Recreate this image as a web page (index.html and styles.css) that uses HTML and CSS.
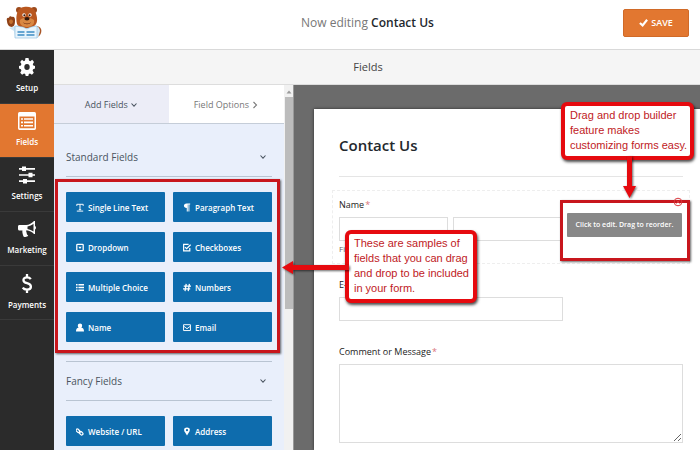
FILE: index.html
```
<!DOCTYPE html>
<html lang="en">
<head>
<meta charset="utf-8" />
<title>Now editing Contact Us</title>
<meta name="viewport" content="width=device-width"/>
<link rel="stylesheet" href="styles.css">
</head>
<body>
  <svg class="symbols" aria-hidden="true">
    <symbol id="down" viewBox="0 0 8 8"><path d="M1.500 2.500 4 5.200 6.500 2.500" fill="none" stroke="currentColor" stroke-width="1.100"/></symbol>
    <symbol id="right" viewBox="0 0 8 8"><path d="M2.500 1 5.500 4 2.500 7" fill="none" stroke="currentColor" stroke-width="1.100"/></symbol>
  </svg>

  <header class="topbar">
    <a class="logo" href="#" aria-label="Home">
      <svg viewBox="0 0 36 34" width="36" height="34">
        <circle cx="13" cy="4" r="3" fill="#9c4a1c"/><circle cx="28" cy="4" r="3" fill="#9c4a1c"/>
        <path d="M31 20c4 1 5 4 4 7-1 3-3 4-5 4z" fill="#a95627"/>
        <path d="M1 15c-1-3 1-4 2-3 0-2 2-2 3-1 2-1 3 1 3 3 0 3 0 6-3 7-3 0-5-3-5-6z" fill="#8f4218"/>
        <path d="M3 15c1-2 3-2 4 0 0 2-1 3-2 3s-2-1-2-3z" fill="#c4702f"/>
        <path d="M3 22l6-2 5-1 14 0c4 1 6 3 6 6l-2 7H9l-1-7z" fill="#cfe6f5"/>
        <path d="M12 5c2-5 14-6 17 0 2 4 3 10 1 13-3 5-16 6-19 0-1-4-1-9 1-13z" fill="#b9571f"/>
        <path d="M14 14c3-3 10-3 14 0 1 4-2 7-7 7s-8-3-7-7z" fill="#d98843"/>
        <circle cx="18" cy="9" r="1.700" fill="#fff"/><circle cx="24" cy="9" r="1.700" fill="#fff"/>
        <circle cx="18.300" cy="9.300" r="1" fill="#30180c"/><circle cx="23.700" cy="9.300" r="1" fill="#30180c"/>
        <ellipse cx="21" cy="12.800" rx="2.600" ry="1.800" fill="#30180c"/>
        <path d="M17 16c2 2 6 2 8 0-1 3-7 3-8 0z" fill="#6a2c13"/>
        <path d="M9 20l8 1 4 2 4-2 6-1v12H9z" fill="#e8f4fc" stroke="#8cbddd" stroke-width=".6"/>
        <path d="M11.500 26h7M11.500 29h7M20.500 26h8M20.500 29h8" stroke="#3c8cc4" stroke-width="1.700"/>
      </svg>
    </a>
    <h1>Now editing <strong>Contact Us</strong></h1>
    <button class="save" type="button">
      <svg viewBox="0 0 10 10" width="9" height="9"><path d="M1 5.500 4 8.200 9 2" fill="none" stroke="#fff" stroke-width="2.400"/></svg>
      SAVE
    </button>
  </header>

  <div class="builder">
    <nav class="sidebar">
      <a href="#setup">
        <svg viewBox="0 0 16 16" width="16" height="18" preserveAspectRatio="none" fill="#fff"><path fill-rule="evenodd" d="M6.500 0h3l.5 2.200 1.300.6L13.200 1.600l1.800 2-1.200 1.900.5 1.200L16 7.200v2.200l-1.900.5-.5 1.200 1.200 1.900-1.900 1.900-1.900-1.200-1.200.5L9.300 16H6.700l-.5-1.800-1.200-.5-1.900 1.200-1.900-1.900 1.200-1.900-.5-1.200L0 9.400V7l1.900-.4.5-1.200L1.200 3.500l1.800-1.900 1.900 1.200L6 2.200zM8 5.300a2.700 2.700 0 1 0 0 5.400 2.700 2.700 0 0 0 0-5.400z"/></svg>
        Setup
      </a>
      <a class="active" href="#fields">
        <svg viewBox="0 0 18 16" width="18" height="18" preserveAspectRatio="none"><path fill="#fff" fill-rule="evenodd" d="M1.500 0h15A1.500 1.500 0 0 1 18 1.500v13a1.500 1.500 0 0 1-1.500 1.500h-15A1.500 1.500 0 0 1 0 14.500v-13A1.500 1.500 0 0 1 1.500 0zM1.500 4v10.500h15V4z"/><path d="M3 6.200h2M6 6.200h9M3 9.200h2M6 9.200h9M3 12.200h2M6 12.200h9" stroke="#fff" stroke-width="1.400"/></svg>
        Fields
      </a>
      <a href="#settings">
        <svg viewBox="0 0 16 16" width="16" height="18" preserveAspectRatio="none"><path d="M0 2.500h16M0 8h16M0 13.500h16" stroke="#fff" stroke-width="1.500"/><path d="M3 .5h4v4H3zM9.500 6h4v4h-4zM4 11.500h4v4H4z" fill="#fff"/></svg>
        Settings
      </a>
      <a href="#marketing">
        <svg viewBox="0 0 18 18" width="18" height="18"><path fill="#fff" fill-rule="evenodd" d="M1.500 5H8c3 0 6-2 8-4h1v5c1.300.5 1.300 3 0 3.500V14h-1c-2-2-4.500-3.500-7.500-3.700-.7 1.200 0 2 .3 2.700-.3 1 .3 1.700 1.400 2.600-1 1.700-3.500 1.700-4.700.8C4.800 14.300 4 12.300 4.500 10.500h-3C.5 10.500 0 9.800 0 9V6.500C0 5.700.5 5 1.500 5zm8 1.400V9c2.200.4 4.200 1.300 6 2.600V3.700c-1.800 1.400-3.800 2.300-6 2.700z"/></svg>
        Marketing
      </a>
      <a href="#payments">
        <svg viewBox="0 0 12 20" width="12" height="19"><path d="M10 5.500C9 4 7.500 3.600 6 3.600c-5 0-5 5 0 6.100 5.500 1.200 5.500 6.700 0 6.700-2 0-3.500-.6-4.500-2.100M6 0v4M6 16v4" fill="none" stroke="#fff" stroke-width="2.400"/></svg>
        Payments
      </a>
    </nav>

    <main class="main">
      <h2 class="toolbar">Fields</h2>
      <div class="columns">
        <section class="panel">
          <div class="panel-body">
            <div class="tabs">
              <button class="active" type="button">Add Fields <svg width="8" height="8"><use href="#down"/></svg></button>
              <button type="button">Field Options <svg width="8" height="8"><use href="#right"/></svg></button>
            </div>

            <div class="group">
              <h3>Standard Fields <svg width="8" height="8"><use href="#down"/></svg></h3>
              <div class="field-grid">
                <button type="button"><svg viewBox="0 0 10 10" width="8" height="9"><path d="M1 3V1h8v2M5 1v7M3.500 7.800h3M1 9.500h8" fill="none" stroke="#fff" stroke-width="1.200"/></svg>Single Line Text</button>
                <button type="button"><svg viewBox="0 0 10 10" width="8" height="9"><path d="M4.500 0H9v1.200H8V10H6.800V1.200H6V10H4.700V5.500C0 5.500 0 0 4.500 0z" fill="#fff"/></svg>Paragraph Text</button>
                <button type="button"><svg viewBox="0 0 10 10" width="8" height="9"><rect x="1" y="1" width="8" height="8" rx="1" fill="none" stroke="#fff" stroke-width="1.600"/><path d="M3 4h4L5 6.800z" fill="#fff"/></svg>Dropdown</button>
                <button type="button"><svg viewBox="0 0 10 10" width="8" height="9"><path d="M8.500 5.500v3.700H.8V1H7M2.500 4.500l2 2L9.500 1.500" fill="none" stroke="#fff" stroke-width="1.500"/></svg>Checkboxes</button>
                <button type="button"><svg viewBox="0 0 10 10" width="8" height="9"><path d="M0 1.500h2M3 1.500h7M0 5h2M3 5h7M0 8.500h2M3 8.500h7" stroke="#fff" stroke-width="1.800"/></svg>Multiple Choice</button>
                <button type="button"><svg viewBox="0 0 10 10" width="8" height="9"><path d="M4 .5 2.500 9.500M8 .5 6.500 9.500M1 3.300h9M0 6.700h9" stroke="#fff" stroke-width="1.600"/></svg>Numbers</button>
                <button type="button"><svg viewBox="0 0 10 10" width="8" height="9"><path d="M5 0c3.500 0 3 4 1.700 5.300C9 5.500 10 7 10 10H0c0-3 1-4.500 3.300-4.700C2 4 1.500 0 5 0z" fill="#fff"/></svg>Name</button>
                <button type="button"><svg viewBox="0 0 10 10" width="8" height="9"><path d="M.7 1.500h8.600v7.300H.7zM1 3.500l4 3 4-3" fill="none" stroke="#fff" stroke-width="1.200"/></svg>Email</button>
                <div class="highlight"></div>
              </div>
            </div>

            <div class="group">
              <h3>Fancy Fields <svg width="8" height="8"><use href="#down"/></svg></h3>
              <div class="field-grid">
                <button type="button"><svg viewBox="0 0 10 10" width="8" height="9"><g fill="none" stroke="#fff" stroke-width="1.500"><rect x="-1.500" y="1" width="5" height="3.200" rx="1.500" transform="rotate(45 1 2.500) translate(2 0)"/><rect x="4" y="5.500" width="5" height="3.200" rx="1.500" transform="rotate(45 6.500 7)"/><path d="M3.500 3.500l3 3"/></g></svg>Website / URL</button>
                <button type="button"><svg viewBox="0 0 10 10" width="8" height="9"><path fill="#fff" fill-rule="evenodd" d="M5 0c4.500 0 4 4 2.500 6L5 10 2.500 6C1 4 .5 0 5 0zm0 2a1.400 1.400 0 1 0 0 2.800A1.400 1.400 0 0 0 5 2z"/></svg>Address</button>
              </div>
            </div>
          </div>
          <div class="scrollbar">
            <svg viewBox="0 0 8 8" width="8" height="8"><path d="M1.500 5.500 4 2.500l2.500 3z" fill="#999"/></svg>
            <div class="thumb"></div>
          </div>
        </section>

        <section class="preview">
          <form class="paper">
            <h2>Contact Us</h2>

            <div class="field selected">
              <label for="first">Name<em>*</em></label>
              <div class="names">
                <input id="first" type="text">
                <input type="text" aria-label="Last name">
              </div>
              <small>First</small>
              <div class="edit-box">
                <svg class="remove" viewBox="0 0 10 10" width="10" height="10"><circle cx="5" cy="5" r="3.800" fill="none" stroke="#d9363b"/><path d="M3.500 3.500l3 3M6.500 3.500l-3 3" stroke="#d9363b"/></svg>
                <span class="hint">Click to edit. Drag to reorder.</span>
              </div>
              <div class="callout callout-drag">
                Drag and drop builder feature makes customizing forms easy.
                <svg class="arrow" viewBox="0 0 14 42" width="14" height="42"><path d="M5 0h5v30h4L7.500 42 1 30h4z" fill="#e60a0f"/></svg>
              </div>
              <div class="callout callout-samples">
                These are samples of fields that you can drag and drop to be included in your form.
                <svg class="arrow" viewBox="0 0 67 14" width="67" height="14"><path d="M67 5v5H11v4L0 7.500 11 1v4z" fill="#e60a0f"/></svg>
              </div>
            </div>

            <div class="field">
              <label for="email">E-mail<em>*</em></label>
              <input id="email" class="medium" type="text">
            </div>

            <div class="field">
              <label for="message">Comment or Message<em>*</em></label>
              <textarea id="message"></textarea>
            </div>
          </form>
        </section>
      </div>
    </main>
  </div>
</body>
</html>
```
FILE: styles.css
```
* {
  box-sizing: border-box;
}
html, body {
  height: 100%;
}
body {
  display: flex;
  flex-direction: column;
  margin: 0;
  overflow: hidden;
  background: #fff;
  color: #444;
  font-family: "Open Sans", "Noto Sans", sans-serif;
  font-size: 9px;
}
h1, h2, h3 {
  margin: 0;
  font-weight: 400;
}
a {
  text-decoration: none;
}
button, input, textarea {
  font-family: inherit;
}
button {
  border: none;
  cursor: pointer;
}
.symbols {
  position: absolute;
  width: 0;
  height: 0;
}

/* top bar */
.topbar {
  display: flex;
  align-items: center;
  flex: none;
  height: 50px;
  padding: 0 11px 4px 6px;
  border-bottom: 1px solid #d9d9d9;
}
.logo {
  width: 36px;
  height: 34px;
}
.topbar h1 {
  flex: 1;
  padding-left: 70px;
  color: #777;
  font-size: 12px;
  text-align: center;
}
.topbar strong {
  color: #23282d;
  font-weight: 600;
}
.save {
  display: flex;
  align-items: center;
  justify-content: center;
  gap: 3px;
  width: 66px;
  height: 28px;
  border: 1px solid #d06a28;
  border-radius: 2px;
  background: #e27730;
  color: #fff;
  font-size: 9px;
  font-weight: 600;
}

/* left navigation */
.builder {
  display: flex;
  flex: 1;
  min-height: 0;
}
.sidebar {
  flex: none;
  width: 54px;
  background: #2b2b2b;
}
.sidebar a {
  display: flex;
  flex-direction: column;
  align-items: center;
  justify-content: center;
  gap: 5px;
  height: 54px;
  border-bottom: 1px solid #3a3a3a;
  color: #fff;
  font-size: 8px;
  font-weight: 600;
  line-height: 14px;
}
.sidebar a.active {
  background: #e27730;
}
.main {
  display: flex;
  flex: 1;
  flex-direction: column;
  min-width: 0;
}
.toolbar {
  flex: none;
  height: 35px;
  padding-right: 18px;
  border-bottom: 1px solid #ddd;
  background: #f5f5f5;
  font-size: 11px;
  line-height: 34px;
  text-align: center;
}
.columns {
  display: flex;
  flex: 1;
  min-height: 0;
}

/* field panel */
.panel {
  display: flex;
  flex: none;
  width: 240px;
  background: #e9effb;
}
.panel-body {
  flex: 1;
}
.tabs {
  display: flex;
  height: 39px;
  border-bottom: 1px solid #c5cdd8;
}
.tabs button {
  flex: 1;
  padding: 0;
  background: #fff;
  color: #777;
  font-size: 9px;
}
.tabs button.active {
  background: #ecedf7;
  color: #4a5460;
}
.tabs svg {
  vertical-align: middle;
}
.group {
  padding: 0 12px;
}
.group h3 {
  display: flex;
  align-items: center;
  justify-content: space-between;
  height: 40px;
  padding-right: 5px;
  border-bottom: 1px solid #b9c4d2;
  color: #4a5460;
  font-size: 10px;
}
.group:nth-child(2) h3 {
  height: 53px;
  padding-top: 14px;
}
.group + .group h3 {
  border-top: 1px solid #b9c4d2;
}
.field-grid {
  position: relative;
  display: grid;
  grid-template-columns: 1fr 1fr;
  gap: 10px 8px;
  padding: 15px 0 19px;
}
.field-grid button {
  display: flex;
  align-items: center;
  gap: 4px;
  height: 30px;
  padding: 0 0 0 10px;
  border-radius: 1px;
  background: #0e6cad;
  color: #fff;
  font-size: 8px;
  font-weight: 600;
}
.highlight {
  position: absolute;
  top: 2px;
  right: -8px;
  bottom: 8px;
  left: -11px;
  border: 3px solid #c8161d;
  box-shadow: 1px 1px 2px rgba(0,0,0,0.6);
  pointer-events: none;
}
.scrollbar {
  display: flex;
  flex-direction: column;
  flex: none;
  align-items: center;
  width: 10px;
  padding-top: 3px;
  border-right: 1px solid #999;
  background: #f1f1f1;
}
.thumb {
  width: 8px;
  height: 212px;
  margin-top: 1px;
  background: #bcbcbc;
}

/* form preview */
.preview {
  flex: 1;
  min-width: 0;
  padding: 24px 0 0 20px;
  background: #6b6b6b;
}
.paper {
  height: 100%;
  padding: 0 17px 0 25px;
  background: #fff;
  box-shadow: 0 0 3px rgba(0,0,0,0.6);
}
.paper h2 {
  height: 68px;
  margin-bottom: 13px;
  border-bottom: 1px solid #e5e5e5;
  color: #23282d;
  font-size: 15px;
  font-weight: 600;
  line-height: 72px;
}
.field {
  margin-bottom: 24px;
}
.field label {
  display: block;
  margin-bottom: 5px;
  color: #222;
  font-size: 9px;
  font-weight: 500;
  line-height: 14px;
}
.field em {
  margin-left: 1px;
  color: #d9737a;
  font-style: normal;
}
.field input, .field textarea {
  display: block;
  height: 24px;
  border: 1px solid #ddd;
  background: #fff;
}
.field .medium {
  width: 65%;
}
.field textarea {
  width: 100%;
  height: 79px;
}
.selected {
  position: relative;
  margin: 0 -7px 14px;
  padding: 7px 6px 6px;
  border: 1px dashed #eee;
}
.names {
  display: grid;
  grid-template-columns: 1fr 1fr;
  gap: 5px;
  width: 65%;
}
.names input {
  width: 100%;
}
.selected small {
  display: block;
  color: #666;
  font-size: 8px;
  line-height: 16px;
}

/* notes drawn over the form */
.edit-box {
  position: absolute;
  top: 9px;
  right: -1px;
  width: 130px;
  height: 61px;
  padding: 10px 5px 0 4px;
  border: 3px solid #c8161d;
  box-shadow: 1px 1px 2px rgba(0,0,0,0.6);
}
.hint {
  display: block;
  height: 24px;
  border-radius: 1px;
  background: #888;
  color: #fff;
  font-size: 7px;
  font-weight: 600;
  line-height: 24px;
  text-align: center;
  white-space: nowrap;
}
.remove {
  position: absolute;
  top: -6px;
  right: 4px;
}
.callout {
  position: absolute;
  padding: 2px 0 3px 5px;
  border: 4px solid #e60a0f;
  border-radius: 6px;
  background: #fff;
  box-shadow: 1px 2px 3px rgba(0,0,0,0.7);
  color: #c01a1e;
  font-family: "Liberation Sans", Arial, sans-serif;
  font-size: 11px;
  line-height: 15px;
}
.callout-drag {
  top: -89px;
  right: -5px;
  width: 133px;
}
.callout-samples {
  top: 39px;
  left: 12px;
  width: 132px;
}
.arrow {
  position: absolute;
  filter: drop-shadow(1px 1px 1px rgba(0,0,0,0.6));
}
.callout-drag .arrow {
  top: 100%;
  left: 57px;
}
.callout-samples .arrow {
  top: 26px;
  right: 100%;
}
```
